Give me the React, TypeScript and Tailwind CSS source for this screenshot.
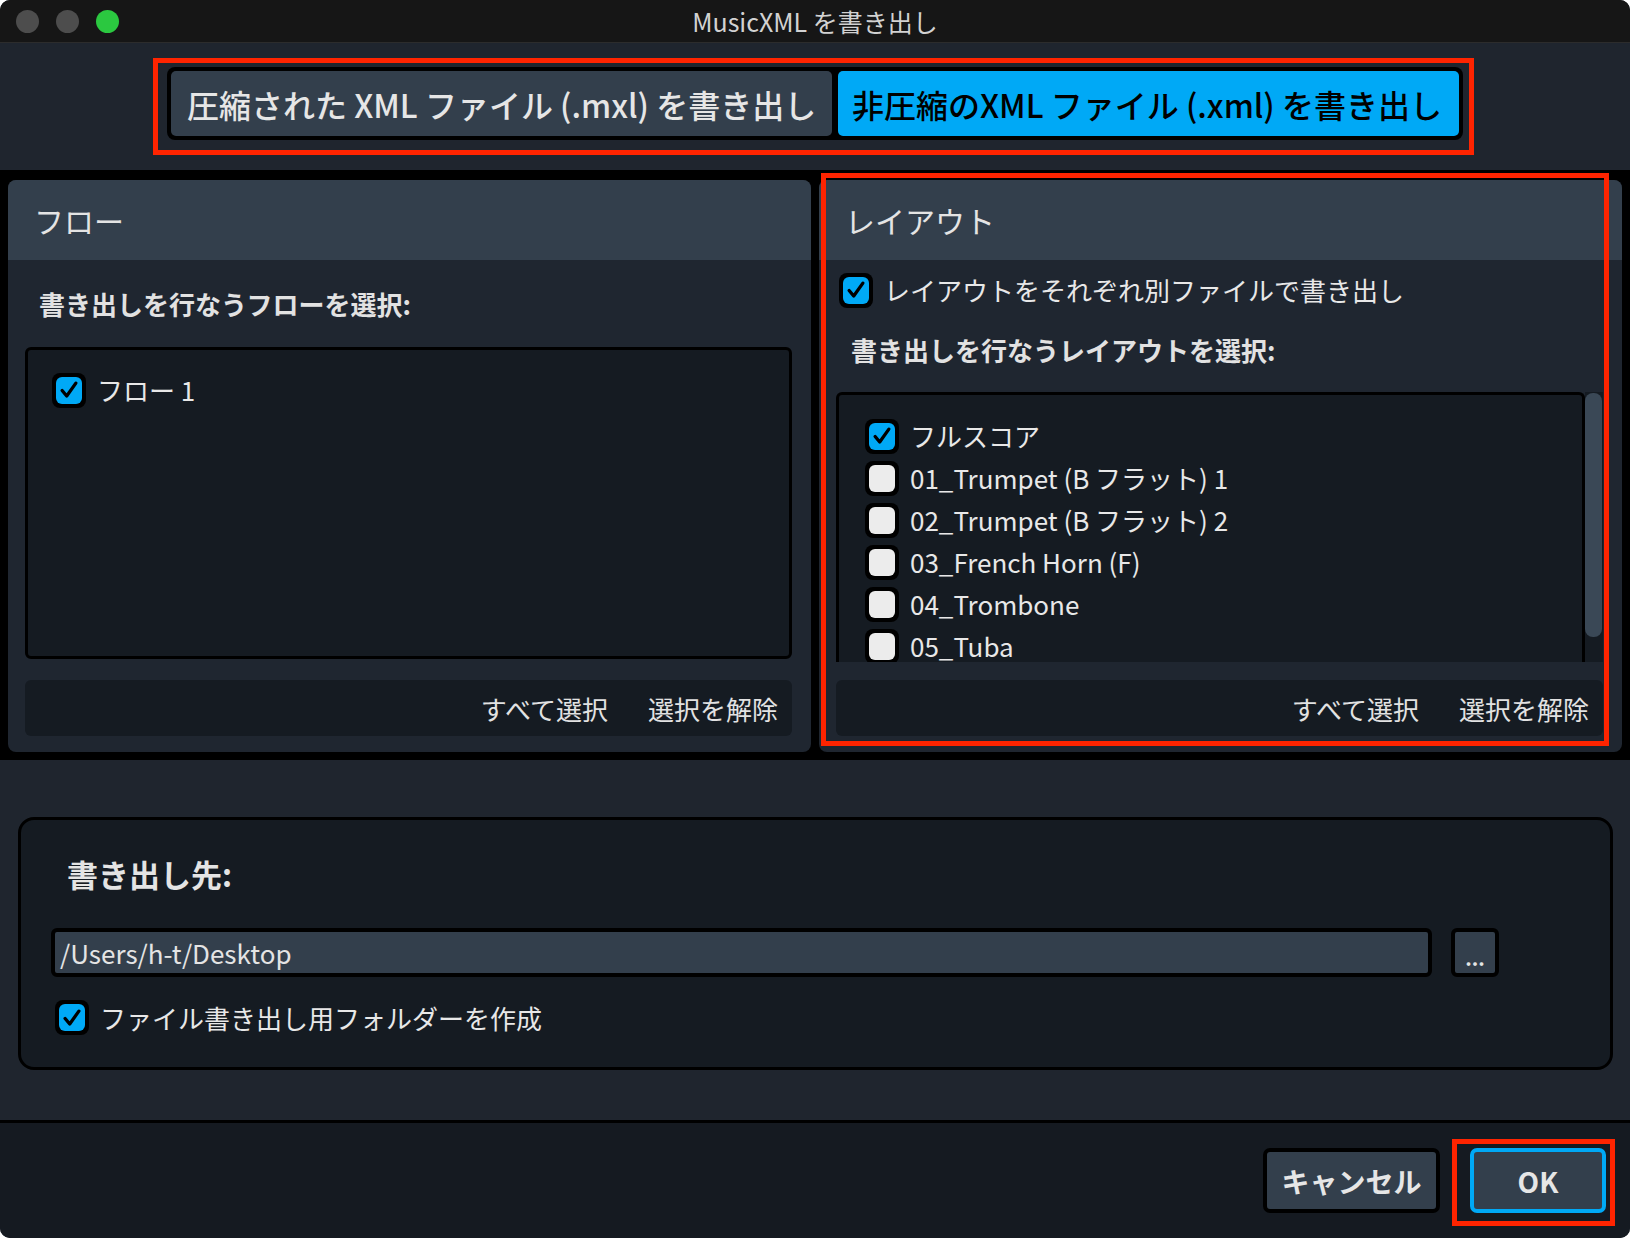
import type { ReactNode } from "react";

const font = "font-['Noto_Sans_CJK_JP','Noto_Sans',sans-serif]";

function Check({ on }: { on: boolean }) {
  return (
    <div className="flex h-[35px] w-[34px] shrink-0 items-center justify-center rounded-[8px] bg-black">
      <div
        className={
          on
            ? "flex h-[27px] w-[26px] items-center justify-center rounded-[6px] bg-[#00a9f6]"
            : "h-[27px] w-[26px] rounded-[6px] bg-[#ececec]"
        }
      >
        {on && (
          <svg viewBox="0 0 24 24" className="h-[22px] w-[22px]">
            <path
              d="M4.5 12.5 L9.5 18.5 L19.5 4.5"
              fill="none"
              stroke="#000"
              strokeWidth="3.6"
              strokeLinecap="round"
              strokeLinejoin="round"
            />
          </svg>
        )}
      </div>
    </div>
  );
}

function Row({ on, children }: { on: boolean; children: ReactNode }) {
  return (
    <div className="flex h-[42px] items-center gap-[11px]">
      <Check on={on} />
      <span className="text-[26px] leading-none text-[#e8e8e8]">{children}</span>
    </div>
  );
}

function PanelFooter({ tight }: { tight?: boolean }) {
  return (
    <div
      className={`${tight ? "mt-[18px]" : "mt-[21px]"} flex h-[56px] items-center justify-end gap-[40px] rounded-[6px] bg-[#151b22] pr-[14px] text-[26px] text-[#e2e2e2]`}
    >
      <span>すべて選択</span>
      <span>選択を解除</span>
    </div>
  );
}

function Panel({ title, children }: { title: string; children: ReactNode }) {
  return (
    <div className="flex flex-1 flex-col overflow-hidden rounded-[8px] bg-[#1f2630]">
      <div className="flex h-[80px] shrink-0 items-center bg-[#333f4c] pl-[26px] text-[30px] text-[#e4e4e4]">
        {title}
      </div>
      <div className="flex flex-1 flex-col pl-[17px] pr-[19px] pb-[16px]">{children}</div>
    </div>
  );
}

const layouts = [
  "01_Trumpet (B フラット) 1",
  "02_Trumpet (B フラット) 2",
  "03_French Horn (F)",
  "04_Trombone",
  "05_Tuba",
];

export default function App() {
  return (
    <div className={`relative h-[1238px] w-[1630px] bg-white ${font}`}>
      <div className="flex h-full flex-col overflow-hidden rounded-[10px] bg-[#1f252e]">
        {/* title bar */}
        <div className="grid h-[43px] shrink-0 grid-cols-[1fr_auto_1fr] items-center border-b border-[#2c2c2c] bg-[#161616]">
          <div className="flex gap-[17px] pl-[16px]">
            <span className="h-[23px] w-[23px] rounded-full bg-[#4d4d4d]" />
            <span className="h-[23px] w-[23px] rounded-full bg-[#4d4d4d]" />
            <span className="h-[23px] w-[23px] rounded-full bg-[#2bc840]" />
          </div>
          <div className="text-[25px] leading-none text-[#d2d2d2]">MusicXML を書き出し</div>
          <div />
        </div>

        {/* format switch */}
        <div className="flex h-[127px] shrink-0 items-start justify-center pt-[24px]">
          <div className="flex gap-[6px] rounded-[8px] bg-black p-[4px] text-[32px] font-medium leading-none">
            <div className="flex h-[65px] w-[661px] items-center rounded-[5px] bg-[#333f4c] pl-[16px] text-[#e6e6e6]">
              圧縮された XML ファイル (.mxl) を書き出し
            </div>
            <div className="flex h-[65px] w-[621px] items-center rounded-[5px] bg-[#00a9f6] pl-[14px] text-black">
              非圧縮のXML ファイル (.xml) を書き出し
            </div>
          </div>
        </div>

        {/* flows / layouts */}
        <div className="flex h-[590px] shrink-0 gap-[8px] bg-black px-[8px] pt-[10px] pb-[8px]">
          <Panel title="フロー">
            <div className="flex h-[87px] items-center pl-[14px] text-[26px] font-semibold text-[#e2e2e2]">
              書き出しを行なうフローを選択:
            </div>
            <div className="h-[312px] rounded-[6px] border-[3px] border-black bg-[#151b22] pl-[24px] pt-[19px]">
              <Row on>フロー 1</Row>
            </div>
            <PanelFooter />
          </Panel>
          <Panel title="レイアウト">
            <div className="flex h-[60px] items-center pl-[3px]">
              <Row on>レイアウトをそれぞれ別ファイルで書き出し</Row>
            </div>
            <div className="flex h-[72px] items-start pl-[15px] pt-[10px] text-[26px] font-semibold text-[#e2e2e2]">
              書き出しを行なうレイアウトを選択:
            </div>
            <div className="flex h-[270px] overflow-hidden">
              <div className="flex-1 overflow-hidden rounded-t-[6px] border-x-[3px] border-t-[3px] border-black bg-[#151b22] pl-[26px] pt-[20px]">
                <Row on>フルスコア</Row>
                {layouts.map((l) => (
                  <Row key={l} on={false}>
                    {l}
                  </Row>
                ))}
              </div>
              <div className="w-[18px] bg-[#151b22] pt-[1px]">
                <div className="h-[244px] w-[17px] rounded-[8px] bg-[#3a4856]" />
              </div>
            </div>
            <PanelFooter tight />
          </Panel>
        </div>

        {/* destination */}
        <div className="flex h-[360px] shrink-0 flex-col pl-[18px] pr-[17px] pt-[57px]">
          <div className="flex h-[253px] flex-col rounded-[16px] border-[3px] border-black bg-[#151b22] pl-[30px]">
            <div className="flex h-[108px] items-center pl-[16px] text-[31px] font-bold text-[#e4e4e4]">
              書き出し先:
            </div>
            <div className="flex items-center gap-[19px]">
              <div className="flex h-[49px] w-[1381px] items-center rounded-[6px] border-[4px] border-black bg-[#333f4c] pl-[5px] text-[26px] text-[#e4e4e4]">
                /Users/h-t/Desktop
              </div>
              <div className="flex h-[49px] w-[48px] items-end justify-center rounded-[6px] border-[4px] border-black bg-[#333f4c] pb-[5px] text-[20px] font-bold leading-none text-[#e4e4e4]">
                ...
              </div>
            </div>
            <div className="mt-[21px] flex items-center gap-[11px] pl-[4px]">
              <Check on />
              <span className="text-[26px] text-[#e8e8e8]">ファイル書き出し用フォルダーを作成</span>
            </div>
          </div>
        </div>

        {/* footer */}
        <div className="flex flex-1 items-start justify-end gap-[30px] border-t-[3px] border-black bg-[#151a21] pr-[24px] pt-[25px] text-[28px] font-semibold">
          <div className="flex h-[65px] w-[177px] items-center justify-center rounded-[7px] border-[4px] border-black bg-[#333f4c] text-[#e6e6e6]">
            キャンセル
          </div>
          <div className="flex h-[65px] w-[136px] items-center justify-center rounded-[7px] border-[4px] border-[#00a9f6] bg-[#333f4c] text-[#e6e6e6]">
            OK
          </div>
        </div>
      </div>

      {/* annotation boxes */}
      <div className="pointer-events-none absolute left-[153px] top-[58px] h-[97px] w-[1321px] border-[5px] border-[#ff2400]" />
      <div className="pointer-events-none absolute left-[821px] top-[173px] h-[573px] w-[788px] border-[5px] border-[#ff2400]" />
      <div className="pointer-events-none absolute left-[1452px] top-[1139px] h-[87px] w-[163px] border-[5px] border-[#ff2400]" />
    </div>
  );
}
